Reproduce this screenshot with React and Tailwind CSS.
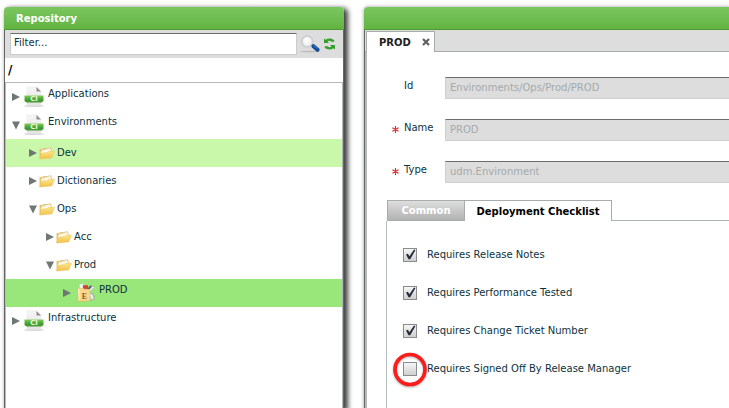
import { useState } from "react";

const TREE = [
  { label: "Applications", level: 0, icon: "ci", open: false },
  { label: "Environments", level: 0, icon: "ci", open: true },
  { label: "Dev", level: 1, icon: "folder", open: false, tone: "bg-[#c9f8ab]" },
  { label: "Dictionaries", level: 1, icon: "folder", open: false },
  { label: "Ops", level: 1, icon: "folder", open: true },
  { label: "Acc", level: 2, icon: "folder", open: false },
  { label: "Prod", level: 2, icon: "folder", open: true },
  { label: "PROD", level: 3, icon: "env", open: false, tone: "bg-[#99e67a]" },
  { label: "Infrastructure", level: 0, icon: "ci", open: false },
];

const INDENT = ["pl-[6px]", "pl-[23px]", "pl-[40px]", "pl-[57px]"];

const FIELDS = [
  { id: "id", label: "Id", value: "Environments/Ops/Prod/PROD", required: false },
  { id: "name", label: "Name", value: "PROD", required: true },
  { id: "type", label: "Type", value: "udm.Environment", required: true },
];

const CHECKS = [
  { label: "Requires Release Notes", on: true },
  { label: "Requires Performance Tested", on: true },
  { label: "Requires Change Ticket Number", on: true },
  { label: "Requires Signed Off By Release Manager", on: false, ring: true },
];

function Arrow({ open }) {
  return (
    <svg viewBox="0 0 8 10" className="h-[10px] w-2 shrink-0" fill="#6f7674">
      {open ? <path d="M0 1.5h8L4 9.5z" /> : <path d="M0 1l8 4-8 4z" />}
    </svg>
  );
}

function CiIcon() {
  return (
    <svg viewBox="0 0 20 22" className="ml-[4px] mr-1 h-[22px] w-5 shrink-0">
      <defs>
        <linearGradient id="ciBand" x1="0" y1="0" x2="0" y2="1">
          <stop offset="0" stopColor="#86cf55" />
          <stop offset="0.5" stopColor="#55ad3a" />
          <stop offset="1" stopColor="#3a962f" />
        </linearGradient>
        <linearGradient id="ciPage" x1="0" y1="0" x2="0" y2="1">
          <stop offset="0" stopColor="#f6f6f6" />
          <stop offset="1" stopColor="#e2e2e2" />
        </linearGradient>
      </defs>
      <ellipse cx="10" cy="20" rx="10" ry="1.1" fill="#d6d6d6" />
      <path d="M3 1h9.500L17 5.500v14.300H3z" fill="url(#ciPage)" stroke="#e4e4e4" strokeWidth="0.5" />
      <path d="M12.500 1L17 5.500h-4.500z" fill="#8e8e8e" />
      <path d="M0.500 9.500h19v5.500h-19z" fill="url(#ciBand)" />
      <path d="M0.500 15h19l-2 1.500h-15z" fill="#469b35" />
      <text x="10" y="15" textAnchor="middle" fontSize="7" fontWeight="bold" fontFamily="DejaVu Sans, sans-serif" fill="#e4f7d8">CI</text>
    </svg>
  );
}

function FolderIcon() {
  return (
    <svg viewBox="0 0 16 14" className="ml-[2px] mr-[2px] h-[14px] w-4 shrink-0">
      <defs>
        <linearGradient id="folderFront" x1="0" y1="0" x2="0" y2="1">
          <stop offset="0" stopColor="#fbe688" />
          <stop offset="1" stopColor="#f1c04c" />
        </linearGradient>
      </defs>
      <path d="M0.500 12.500V3h3l1-1h7.500l1 4-9 6.500z" fill="#ecc66c" />
      <path d="M2 4L11.500 1.500l1 4L3 8z" fill="#f6efd6" stroke="#cfb071" strokeWidth="0.5" />
      <path d="M2 5.800L11.500 3.500l.8 2.500L2.500 8.500z" fill="#fffbe6" />
      <path d="M0.500 13L2.800 7.300l5.500-.8 1-1 6.400-.3L12.700 12z" fill="url(#folderFront)" stroke="#eec458" strokeWidth="0.5" />
    </svg>
  );
}

function EnvIcon() {
  return (
    <svg viewBox="0 0 18 19" className="mb-px ml-[6px] mr-1 h-[19px] w-[18px] shrink-0">
      <path d="M2.500 1.500l4-1v5h-4z" fill="#f8f8f8" stroke="#c0c0c0" strokeWidth="0.400" />
      <path d="M5.500 2.500l5-.5 1.500 4H6.500z" fill="#cf4336" />
      <path d="M10.500 6L13 2.500l2.500.5-1.500 3.500z" fill="#53616b" />
      <path d="M11.500 7.500l4-4.500 1.500 1.500-4.500 5z" fill="#f5f5f5" stroke="#999" strokeWidth="0.500" />
      <path d="M12 10l4 1 1.500 5-4 1.200z" fill="#e8e8ea" stroke="#85898d" strokeWidth="0.600" />
      <path d="M1 5.200l4.500-.2L7 6.200l6 .300v11.200L1.500 18.300z" fill="#f9d98f" stroke="#e3b15c" strokeWidth="0.500" />
      <path d="M1 5.200l1.500 1v11.500l-1-.5z" fill="#fff0bd" />
      <text x="7.500" y="15.500" textAnchor="middle" fontSize="8" fontWeight="bold" fontFamily="Liberation Serif, serif" fill="#8a5a26">E</text>
    </svg>
  );
}

function SearchIcon() {
  return (
    <svg viewBox="0 0 20 18" className="h-[18px] w-5">
      <defs>
        <radialGradient id="lens" cx="0.45" cy="0.4" r="0.6">
          <stop offset="0" stopColor="#ffffff" />
          <stop offset="1" stopColor="#e8ebee" />
        </radialGradient>
      </defs>
      <ellipse cx="9" cy="16.500" rx="9" ry="0.800" fill="#bcbcbc" />
      <path d="M10.500 9l3 2.300" stroke="#c5c8cb" strokeWidth="2.500" />
      <circle cx="7.300" cy="6.500" r="5.500" fill="url(#lens)" stroke="#cfd0d1" strokeWidth="2" />
      <path d="M13.500 11.200l4 3.600" stroke="#124a9c" strokeWidth="4" strokeLinecap="round" />
      <path d="M13.500 10.300l3.600 2.900" stroke="#2f78c4" strokeWidth="1.200" strokeLinecap="round" />
    </svg>
  );
}

function RefreshIcon() {
  return (
    <svg viewBox="0 0 11 12" className="h-3 w-[11px]" fill="#35a02b">
      <path d="M0 0.500l1.600 1.300C4 0 7.800.2 10.200 2.200v1.600H7.500C6 2.500 4.500 2.600 3.600 3.600L5 5H0z" />
      <path d="M11 11.500l-1.600-1.300C7 12 3.200 11.800.8 9.800V8.200h2.700C5 9.500 6.500 9.400 7.400 8.400L6 7h5z" />
    </svg>
  );
}

function PanelHeader({ children }) {
  return (
    <header className="h-[23px] shrink-0 rounded-t border-b border-[#4e9a33] bg-linear-to-b from-[#79c65d] via-[#70be53] to-[#62b341] px-3 text-white">
      {children}
    </header>
  );
}

const ICONS = { ci: CiIcon, folder: FolderIcon, env: EnvIcon };

function TreeRow({ node }) {
  const Icon = ICONS[node.icon];
  const lift = node.icon === "folder" ? "" : "pb-[6px]";
  return (
    <li className={`flex h-7 items-center ${INDENT[node.level]} ${node.tone || ""}`}>
      <Arrow open={node.open} />
      <Icon />
      <span className={lift}>{node.label}</span>
    </li>
  );
}

function Repository() {
  return (
    <section className="ml-1 mr-5 flex w-[340px] shrink-0 flex-col rounded-t shadow-[3px_2px_5px_1px_rgba(0,0,0,0.75)]">
      <PanelHeader>
        <h1 className="pt-px font-bold leading-[22px]">Repository</h1>
      </PanelHeader>
      <div className="flex grow flex-col border-x border-[#666] bg-white">
        <div className="flex h-7 shrink-0 items-center bg-[#dddddd] pl-[5px] pr-2">
          <input
            aria-label="Filter"
            placeholder="Filter..."
            className="h-[22px] min-w-0 grow border border-[#cccccc] border-t-[#6c6c6c] bg-white px-[3px] pb-[3px] outline-none placeholder:text-[#0b333c]"
          />
          <button aria-label="Search" className="ml-[3px]"><SearchIcon /></button>
          <button aria-label="Refresh" className="ml-1"><RefreshIcon /></button>
        </div>
        <div className="h-6 shrink-0 pl-[3px] text-[12px] font-bold leading-6 text-black">/</div>
        <ul className="grow border-x border-t border-[#b5b8b8]">
          {TREE.map((node) => (
            <TreeRow key={node.label} node={node} />
          ))}
        </ul>
      </div>
    </section>
  );
}

function CheckRow({ item }) {
  const [on, setOn] = useState(item.on);
  return (
    <label className="flex h-[14px] items-center gap-[10px]">
      <span className="relative grid size-[14px] shrink-0">
        <input
          type="checkbox"
          checked={on}
          onChange={(e) => setOn(e.target.checked)}
          className="col-start-1 row-start-1 size-[14px] appearance-none border border-[#8a8d8d] bg-linear-to-b from-[#f6f6f6] to-[#cfcfcf]"
        />
        {on && (
          <svg viewBox="0 0 14 14" className="pointer-events-none z-10 col-start-1 row-start-1 size-[14px]">
            <path d="M3 6.500l1.900-.800 1.500 2.600L11 1.500l1.500.400L7.200 11.300H5.500z" fill="#272c3b" />
          </svg>
        )}
        {item.ring && (
          <svg viewBox="0 0 36 36" className="pointer-events-none absolute -left-[11px] -top-[10px] size-9 max-w-none drop-shadow-[0_1px_1px_rgba(0,0,0,0.3)]">
            <circle cx="18" cy="17.500" r="15" fill="none" stroke="#fb1d1a" strokeWidth="3.700" />
          </svg>
        )}
      </span>
      <span>{item.label}</span>
    </label>
  );
}

function Editor() {
  return (
    <section className="flex min-w-0 grow flex-col rounded-tl shadow-[0_0_3px_1px_rgba(0,0,0,0.25)]">
      <div className="h-[23px] shrink-0 rounded-tl border-b border-[#4e9a33] bg-linear-to-b from-[#79c65d] via-[#70be53] to-[#62b341]" />
      <div className="flex grow flex-col border-l border-[#666] bg-white">
        <div className="flex h-[22px] shrink-0 border-b border-[#a9acac] bg-[#dddddd] pl-px pt-px">
          <div className="-mb-px flex w-[69px] items-center justify-between border border-b-0 border-[#a9acac] bg-white pl-3 pr-1">
            <span className="pt-px font-bold text-[#222]">PROD</span>
            <button aria-label="Close PROD">
              <svg viewBox="0 0 8 8" className="size-2">
                <path d="M1 1l6 6M7 1L1 7" stroke="#606060" strokeWidth="2.200" />
              </svg>
            </button>
          </div>
        </div>
        <div className="flex grow flex-col border-l-2 border-[#b5b9b9] pl-[19px] pt-[25px]">
          <div className="flex flex-col gap-5">
            {FIELDS.map((f) => (
              <div key={f.id} className="flex h-[22px] items-center">
                <span className="w-[18px] shrink-0 pb-px pl-[6px]">
                  {f.required ? (
                    <svg viewBox="0 0 8 8" className="size-[7px]" stroke="#dc2a2a" strokeWidth="1.300">
                      <path d="M4 0v8M0.500 2l7 4M7.500 2l-7 4" />
                    </svg>
                  ) : null}
                </span>
                <label htmlFor={f.id} className="w-[41px] shrink-0 pb-1">{f.label}</label>
                <input
                  id={f.id}
                  disabled
                  value={f.value}
                  className="h-[22px] min-w-0 grow border border-r-0 border-[#cfcfcf] border-t-[#6c6c6c] bg-[#dddddd] px-1 pb-[2px] text-[#a3abab]"
                />
              </div>
            ))}
          </div>
          <div role="tablist" className="mt-[17px] flex h-[21px]">
            <button role="tab" aria-selected="false" className="ml-px w-[77px] border border-r-0 border-[#a9acac] bg-linear-to-b from-[#dedede] to-[#b2b2b2] font-bold text-white">
              Common
            </button>
            <button role="tab" aria-selected="true" className="w-[148px] border border-b-0 border-[#a9acac] bg-white pt-px font-bold text-black">
              Deployment Checklist
            </button>
            <div className="grow border-b border-[#a9b2b2]" />
          </div>
          <div role="tabpanel" className="flex grow flex-col gap-6 border-l border-[#b5bcbc] pl-4 pt-[27px]">
            {CHECKS.map((c) => (
              <CheckRow key={c.label} item={c} />
            ))}
          </div>
        </div>
      </div>
    </section>
  );
}

export default function App() {
  return (
    <main className="flex h-screen overflow-hidden bg-white pt-[7px] font-['DejaVu_Sans',Verdana,sans-serif] text-[10px] leading-[14px] text-[#0b333c]">
      <Repository />
      <Editor />
    </main>
  );
}
